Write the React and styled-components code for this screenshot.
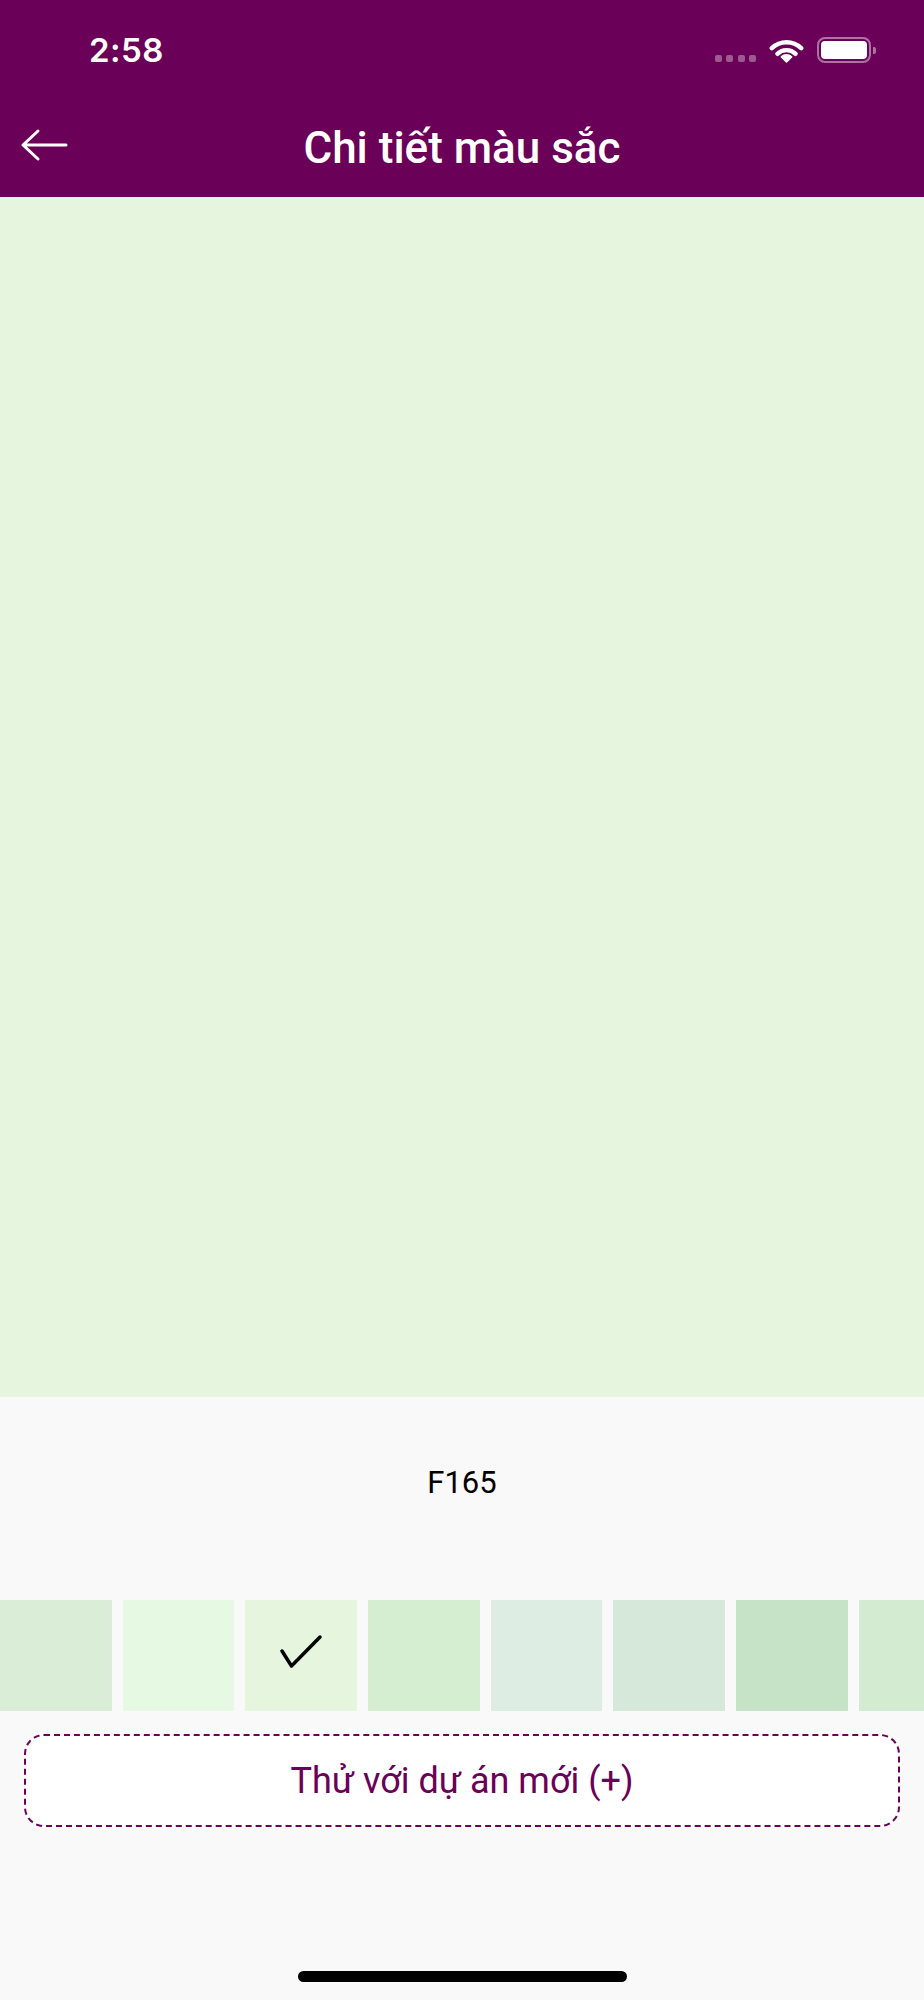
import React from 'react';
import styled, { createGlobalStyle } from 'styled-components';

const PURPLE = '#6A0057';

const GlobalStyle = createGlobalStyle`
  html, body {
    margin: 0;
    padding: 0;
    background: #f9f9f9;
    font-family: Roboto, "Noto Sans", sans-serif;
  }
  * { box-sizing: border-box; }
`;

const Screen = styled.div`
  width: 924px;
  min-height: 2000px;
  background: #f9f9f9;
  display: flex;
  flex-direction: column;
`;

const TopBar = styled.header`
  background: ${PURPLE};
  color: #fff;
`;

const StatusBar = styled.div`
  height: 100px;
  display: flex;
  align-items: center;
  justify-content: space-between;
  padding: 0 48px 0 89px;
`;

const Time = styled.span`
  font-family: Inter, Roboto, sans-serif;
  font-size: 33px;
  font-weight: 600;
  letter-spacing: 0.5px;
  line-height: 1;
`;

const StatusIcons = styled.div`
  display: flex;
  align-items: center;
  gap: 13px;
`;

const Dots = styled.div`
  display: flex;
  gap: 4.5px;
  margin-top: 16px;
  margin-right: 0;
`;

const Dot = styled.span`
  width: 7px;
  height: 7px;
  border-radius: 2px;
  background: rgba(255, 255, 255, 0.35);
`;

const Battery = styled.div`
  display: flex;
  align-items: center;
  gap: 2px;
`;

const BatteryBody = styled.div`
  width: 54px;
  height: 26px;
  border-radius: 8px;
  border: 2px solid rgba(255, 255, 255, 0.45);
  padding: 2px;
  display: flex;
`;

const BatteryFill = styled.div`
  flex: 1;
  background: #fff;
  border-radius: 4px;
`;

const BatteryNub = styled.div`
  width: 3px;
  height: 7px;
  border-radius: 0 2px 2px 0;
  background: rgba(255, 255, 255, 0.45);
`;

const NavBar = styled.div`
  height: 97px;
  display: grid;
  grid-template-columns: 1fr auto 1fr;
  align-items: center;
  padding-bottom: 2px;
`;

const BackButton = styled.button`
  justify-self: start;
  background: none;
  border: none;
  padding: 0 0 0 20px;
  margin-top: -6px;
  display: flex;
  cursor: pointer;
`;

const Title = styled.h1`
  margin: 0;
  font-size: 44px;
  font-weight: 500;
  line-height: 1;
  color: #fff;
`;

const Preview = styled.div`
  height: 1200px;
  background: ${p => p.$color};
`;

const CodeSection = styled.div`
  height: 170px;
  display: flex;
  align-items: center;
  justify-content: center;
`;

const Code = styled.span`
  font-size: 31px;
  color: #000;
`;

const SwatchRow = styled.div`
  margin-top: 33px;
  display: flex;
  gap: 11px;
  overflow: hidden;
`;

const Swatch = styled.div`
  flex: 0 0 111.7px;
  height: 111px;
  background: ${p => p.$color};
  display: flex;
  align-items: center;
  justify-content: center;
`;

const Check = styled.svg`
  margin: 0 1px 8px 0;
`;

const TryButton = styled.button`
  margin: 23px 24px 0;
  height: 93px;
  border: 2px dashed ${PURPLE};
  border-radius: 20px;
  background: #fff;
  color: ${PURPLE};
  font-family: Roboto, "Noto Sans", sans-serif;
  font-size: 36px;
  cursor: pointer;
`;

const HomeIndicator = styled.div`
  margin: 144px auto 0;
  width: 329px;
  height: 11px;
  border-radius: 6px;
  background: #000;
`;

const swatches = [
  '#DAEDD6',
  '#E6FAE3',
  '#E6F6DE',
  '#D5EDD1',
  '#DEEDE3',
  '#D6E8DA',
  '#C6E3C7',
  '#D2EBD1',
];

function WifiIcon() {
  return (
    <svg width="35" height="25" viewBox="0 0 35 25" fill="none">
      <path d="M2.8 10.2 A21.2 21.2 0 0 1 32.2 10.2" stroke="#fff" strokeWidth="4.4" strokeLinecap="round" />
      <path d="M8.4 15.8 A13.2 13.2 0 0 1 26.6 15.8" stroke="#fff" strokeWidth="4.4" strokeLinecap="round" />
      <path d="M17.5 24 L12.4 18.9 A7.2 7.2 0 0 1 22.6 18.9 Z" fill="#fff" stroke="#fff" strokeWidth="1.5" strokeLinejoin="round" />
    </svg>
  );
}

export default function App() {
  const selected = 2;
  return (
    <Screen>
      <GlobalStyle />
      <TopBar>
        <StatusBar>
          <Time>2:58</Time>
          <StatusIcons>
            <Dots>
              <Dot />
              <Dot />
              <Dot />
              <Dot />
            </Dots>
            <WifiIcon />
            <Battery>
              <BatteryBody>
                <BatteryFill />
              </BatteryBody>
              <BatteryNub />
            </Battery>
          </StatusIcons>
        </StatusBar>
        <NavBar>
          <BackButton aria-label="Back">
            <svg width="48" height="34" viewBox="0 0 48 34" fill="none">
              <path d="M3 17 H46 M18 3 L3 17 L18 31" stroke="#fff" strokeWidth="3" strokeLinecap="round" strokeLinejoin="round" />
            </svg>
          </BackButton>
          <Title>Chi tiết màu sắc</Title>
          <span />
        </NavBar>
      </TopBar>

      <Preview $color="#E6F6DE" />

      <CodeSection>
        <Code>F165</Code>
      </CodeSection>

      <SwatchRow>
        {swatches.map((c, i) => (
          <Swatch key={i} $color={c}>
            {i === selected && (
              <Check width="44" height="35" viewBox="0 0 44 35" fill="none">
                <path d="M3 17 L12.5 32 L41 3" stroke="#000" strokeWidth="3.5" strokeLinecap="round" strokeLinejoin="round" />
              </Check>
            )}
          </Swatch>
        ))}
      </SwatchRow>

      <TryButton>Thử với dự án mới (+)</TryButton>

      <HomeIndicator />
    </Screen>
  );
}
